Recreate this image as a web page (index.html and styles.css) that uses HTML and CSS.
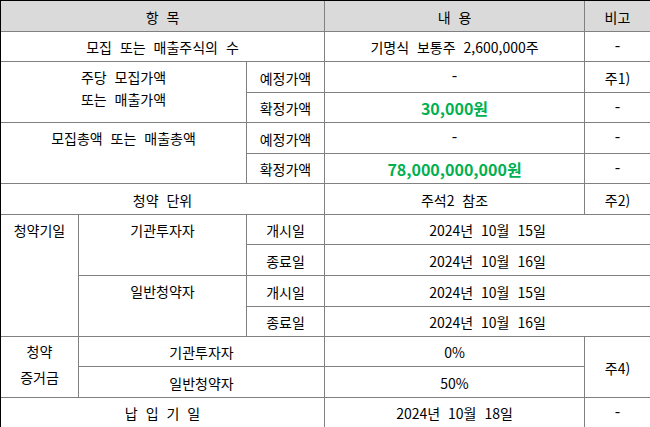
FILE: index.html
```html
<!DOCTYPE html>
<html lang="ko">
<head>
<meta charset="utf-8">
<title>공모 개요</title>
<link rel="stylesheet" href="styles.css">
</head>
<body>
<div class="sheet">
  <div class="cell head c3">항 목</div>
  <div class="cell head">내 용</div>
  <div class="cell head">비고</div>

  <div class="cell c3">모집 또는 매출주식의 수</div>
  <div class="cell">기명식 보통주 2,600,000주</div>
  <div class="cell dash">-</div>

  <div class="cell c2 r2 top"><div class="lines">주당 모집가액<br>또는 매출가액</div></div>
  <div class="cell">예정가액</div>
  <div class="cell dash">-</div>
  <div class="cell">주1)</div>
  <div class="cell">확정가액</div>
  <div class="cell green">30,000원</div>
  <div class="cell dash">-</div>

  <div class="cell c2 r2 top">모집총액 또는 매출총액</div>
  <div class="cell">예정가액</div>
  <div class="cell dash">-</div>
  <div class="cell dash">-</div>
  <div class="cell">확정가액</div>
  <div class="cell green">78,000,000,000원</div>
  <div class="cell dash">-</div>

  <div class="cell c3">청약 단위</div>
  <div class="cell">주석2 참조</div>
  <div class="cell">주2)</div>

  <div class="cell r4 top">청약기일</div>
  <div class="cell r2 top">기관투자자</div>
  <div class="cell">개시일</div>
  <div class="cell c2">2024년 10월 15일</div>
  <div class="cell">종료일</div>
  <div class="cell c2">2024년 10월 16일</div>
  <div class="cell r2 top">일반청약자</div>
  <div class="cell">개시일</div>
  <div class="cell c2">2024년 10월 15일</div>
  <div class="cell">종료일</div>
  <div class="cell c2">2024년 10월 16일</div>

  <div class="cell r2"><div class="lines tall">청약<br>증거금</div></div>
  <div class="cell c2">기관투자자</div>
  <div class="cell">0%</div>
  <div class="cell r2">주4)</div>
  <div class="cell c2">일반청약자</div>
  <div class="cell">50%</div>

  <div class="cell c3">납 입 기 일</div>
  <div class="cell">2024년 10월 18일</div>
  <div class="cell dash">-</div>
</div>
</body>
</html>
```

FILE: styles.css
```css
html, body {
  margin: 0;
  padding: 0;
  background: #ffffff;
  overflow: hidden;
}

.sheet {
  display: grid;
  width: max-content;
  grid-template-columns: 78px 168px 78px 260px 66px;
  grid-template-rows: 31px 30px 31px 30px 31px 30px 31px 30px 31px 31px 30px 30px 31px 30px;
  border-top: 1px solid #000000;
  border-left: 1px solid #000000;
  font-family: "Noto Sans CJK KR", "Noto Sans", sans-serif;
  font-size: 14px;
  word-spacing: 4px;
  color: #000000;
}

.cell {
  box-sizing: border-box;
  border-right: 1px solid #808080;
  border-bottom: 1px solid #808080;
  display: flex;
  align-items: center;
  justify-content: center;
  text-align: center;
  white-space: nowrap;
  padding-top: 1px;
}

.head {
  background: #dadada;
}

.c2 { grid-column: span 2; }
.c3 { grid-column: span 3; }
.r2 { grid-row: span 2; }
.r4 { grid-row: span 4; }

.top {
  align-items: flex-start;
  padding-top: 4px;
  line-height: 22px;
}

.lines {
  line-height: 22px;
}

.lines.tall {
  line-height: 26px;
  margin-top: -7px;
}

.dash {
  font-family: "Liberation Mono", monospace;
  font-size: 15px;
}

.green {
  color: #00b050;
  font-weight: 700;
  font-size: 16px;
  word-spacing: 0;
}
```
